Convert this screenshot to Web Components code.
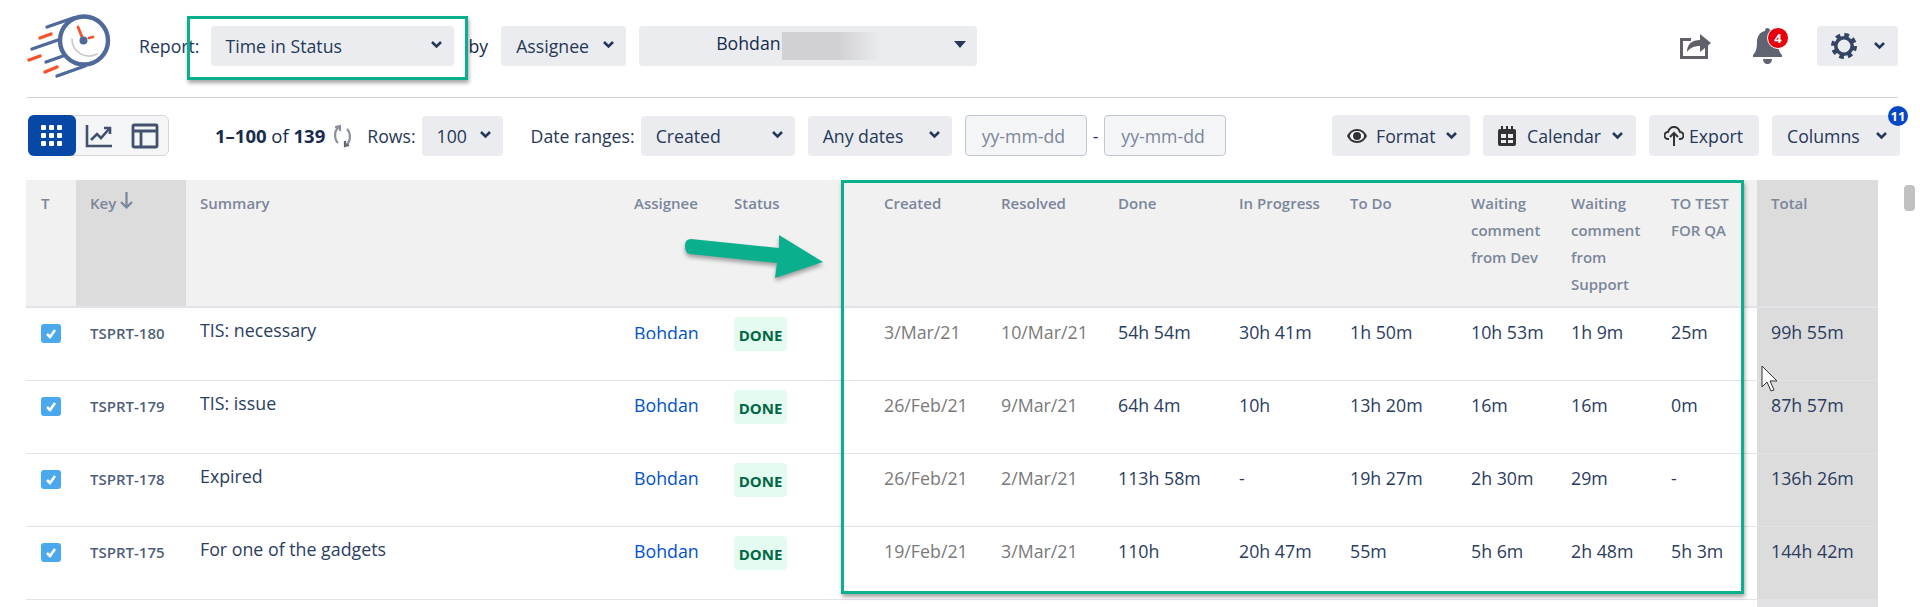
<!DOCTYPE html>
<html>
<head>
<meta charset="utf-8">
<title>Time in Status</title>
<style>
  html, body { margin: 0; height: 607px; overflow: hidden; background: #fff; }
  body { font-family: "Open Sans", "Noto Sans", sans-serif; color: #253858; }
  tis-app { position: relative; }
</style>
</head>
<body>
<tis-app>
  <tis-topbar>
    <tis-select slot="filters" width="243" style="margin-left:11px">Time in Status</tis-select>
    <span slot="filters" style="margin:0 13px 0 15px;color:#172b4d">by</span>
    <tis-select slot="filters" width="125">Assignee</tis-select>
    <tis-select slot="filters" width="338" caret="solid" style="margin-left:13px">
      <span style="color:#172b4d;margin-left:62px">Bohdan</span><span style="display:inline-block;width:100px;height:28px;margin-left:1px;vertical-align:middle;background:linear-gradient(90deg,#d1d1d5 0,#d1d1d5 55%,#ebecf0 100%)"></span>
    </tis-select>
  </tis-topbar>
  <tis-toolbar></tis-toolbar>
  <tis-table></tis-table>
  <tis-callouts></tis-callouts>
</tis-app>

<script>
const chevron = `<svg width="13" height="9" viewBox="0 0 13 9"><path d="M2 2l4.500 4.500L11 2" fill="none" stroke="#253858" stroke-width="2.600"/></svg>`;

class TisSelect extends HTMLElement {
  constructor() {
    super();
    this.attachShadow({ mode: 'open' });
    const w = this.getAttribute('width') || 100;
    const caret = this.getAttribute('caret') === 'solid'
      ? `<svg width="12" height="7" viewBox="0 0 12 7"><path d="M0 0h12L6 7z" fill="#253858"/></svg>`
      : chevron;
    this.shadowRoot.innerHTML = `
      <style>
        :host { display:inline-flex; align-items:center; justify-content:space-between; box-sizing:border-box;
                width:${w}px; height:40px; padding:0 11px 0 15px; background:#ebecf0; border-radius:4px;
                font-size:17.700px; color:#253858; white-space:nowrap; flex:none; }
        svg { margin-top:-3px; flex:none; }
      </style>
      <span><slot></slot></span>${caret}`;
  }
}
customElements.define('tis-select', TisSelect);

class TisButton extends HTMLElement {
  constructor() {
    super();
    this.attachShadow({ mode: 'open' });
    const w = this.getAttribute('width') || 100;
    this.shadowRoot.innerHTML = `
      <style>
        :host { display:inline-flex; align-items:center; box-sizing:border-box; width:${w}px; height:41px;
                padding:0 12px 0 15px; gap:9px; background:#ebecf0; border-radius:4px; font-size:17.700px;
                color:#253858; white-space:nowrap; position:relative; }
        .badge { position:absolute; top:-9px; right:-8px; width:20px; height:20px; border-radius:50%;
                 background:#0747c6; color:#fff; font-size:13px; font-weight:700; text-align:center; line-height:20px; }
      </style>
      <slot name="icon"></slot><span style="flex:1"><slot></slot></span>${this.hasAttribute('menu') ? chevron : ''}
      ${this.hasAttribute('badge') ? `<span class="badge">${this.getAttribute('badge')}</span>` : ''}`;
  }
}
customElements.define('tis-button', TisButton);

class TisTopbar extends HTMLElement {
  constructor() {
    super();
    this.attachShadow({ mode: 'open' });
    this.shadowRoot.innerHTML = `
      <style>
        :host { display:flex; align-items:center; box-sizing:border-box; height:98px; margin:0 22px 0 27px; padding-bottom:6px;
                border-bottom:1px solid #d2d2d2; font-size:17.700px; color:#253858; }
        .logo { flex:none; align-self:flex-start; margin:14px 28px 0 0; }
        .right { margin-left:auto; display:flex; align-items:center; }
        .bell { position:relative; width:32px; height:36px; margin:0 32px 0 42px; }
        .bell b { position:absolute; left:14px; top:-1px; width:20px; height:20px; border-radius:50%; background:#e8000d;
                  border:1px solid #fff; color:#fff; font-size:13px; line-height:20px; text-align:center; }
        .gear { display:flex; align-items:center; box-sizing:border-box; width:81px; height:40px; background:#ebecf0;
                border-radius:4px; padding:0 12px 0 14px; justify-content:space-between; }
      </style>
      <svg class="logo" width="84" height="66" viewBox="27 14 84 66" fill="none" stroke-linecap="round">
        <g stroke="#4f6a9a" stroke-width="3.400">
          <circle cx="84" cy="40.500" r="24" stroke-width="4.400"/>
          <path d="M47 27L73 18M32 49L58 40M46 62L63 56M57 76L85 66"/>
        </g>
        <path d="M72 39a17 17 0 0 0 25 15" stroke="#c9c9c9" stroke-width="1.600"/>
        <g stroke="#f4532c" stroke-width="3.400">
          <path d="M40 38L51 34M29 60L40 56M45 72L57 67"/>
          <path d="M78 27L82 37M89 38L93 37" stroke-width="2.800"/>
        </g>
        <circle cx="83.500" cy="40.500" r="4" fill="#4f6a9a"/>
      </svg>
      <span>Report:</span>
      <slot name="filters"></slot>
      <div class="right">
        <svg width="31" height="27" viewBox="0 0 31 27" fill="#5f6068">
          <path d="M0 6h11v3H3v15h22v-9l3-2v14H0z"/>
          <path d="M7 20c0-8 5-12 13-12V2l11 9-11 9v-6c-6 0-10 2-13 6z"/>
        </svg>
        <div class="bell">
          <svg width="30" height="36" viewBox="0 0 30 36" fill="#5f6470">
            <path d="M14 0c2 0 3 1 3 3 5 1 8 5 8 11 0 6 1 10 4 13v2H0v-2c3-3 4-7 4-13 0-6 3-10 8-11 0-2 1-3 2-3z"/>
            <path d="M10 31h9c0 3-2 5-4.500 5S10 34 10 31z"/>
          </svg>
          <b>4</b>
        </div>
        <div class="gear">
          <svg width="26" height="26" viewBox="0 0 26 26" fill="none" stroke="#344563">
            <circle cx="13" cy="13" r="8.200" stroke-width="3.600"/>
            <circle cx="13" cy="13" r="11" stroke-width="4" stroke-dasharray="4.640 4"/>
          </svg>
          ${chevron}
        </div>
      </div>`;
  }
}
customElements.define('tis-topbar', TisTopbar);

class TisToolbar extends HTMLElement {
  constructor() {
    super();
    this.attachShadow({ mode: 'open' });
    this.shadowRoot.innerHTML = `
      <style>
        :host { display:flex; align-items:center; height:41px; margin:17px 20px 0 28px; font-size:17.700px; color:#253858; white-space:nowrap; }
        .toggle { display:flex; width:141px; height:41px; box-sizing:border-box; border:1px solid #d5d6d9; border-radius:6px; background:#f4f5f7; flex:none; }
        .toggle div { display:flex; align-items:center; justify-content:center; width:46px; }
        .toggle .on { width:48px; margin:-1px 0 -1px -1px; background:#0747a6; border-radius:6px; }
        .count { margin-left:46px; color:#172b4d; font-size:18.500px; }
        .count b { font-weight:700; }
        .refresh { margin:0 0 0 7px; flex:none; }
        input { box-sizing:border-box; width:122px; height:41px; border:1px solid #c1c7d0; border-radius:4px; background:#f4f5f7;
                padding:0 0 0 16px; font:17.700px "Open Sans", sans-serif; flex:none; }
        input::placeholder { color:#7a869a; opacity:1; }
        .right { margin-left:auto; display:flex; gap:13px; }
      </style>
      <div class="toggle">
        <div class="on"><svg width="22" height="22" viewBox="0 0 22 22" fill="#fff">
          <rect width="5" height="5" rx="1"/><rect x="8" width="5" height="5" rx="1"/><rect x="16" width="5" height="5" rx="1"/>
          <rect y="8" width="5" height="5" rx="1"/><rect x="8" y="8" width="5" height="5" rx="1"/><rect x="16" y="8" width="5" height="5" rx="1"/>
          <rect y="16" width="5" height="5" rx="1"/><rect x="8" y="16" width="5" height="5" rx="1"/><rect x="16" y="16" width="5" height="5" rx="1"/>
        </svg></div>
        <div><svg width="28" height="24" viewBox="0 0 28 24" fill="none" stroke="#42526e" stroke-width="2.600">
          <path d="M2 1v21h25"/><path d="M6 16l6-6 4 4 8-9"/><path d="M19 4h6v6"/>
        </svg></div>
        <div><svg width="28" height="26" viewBox="0 0 28 26" fill="none" stroke="#42526e" stroke-width="2.800">
          <rect x="2" y="2" width="24" height="22" rx="1"/><path d="M2 8h24M10 8v16"/>
        </svg></div>
      </div>
      <span class="count"><b>1–100</b> of <b>139</b></span>
      <svg class="refresh" width="20" height="24" viewBox="0 0 20 24" fill="none" stroke="#8a8f99" stroke-width="2.200">
        <path d="M7 3C2 6 2 15 6 19M3 3l5-1 0 5"/><path d="M14 21c5-3 5-12 1-16"/><path d="M17 21l-4 1 0-5" stroke="#5f6675"/>
      </svg>
      <span style="margin:0 6px 0 15px">Rows:</span>
      <tis-select width="81">100</tis-select>
      <span style="margin:0 6px 0 28px">Date ranges:</span>
      <tis-select width="154">Created</tis-select>
      <tis-select width="144" style="margin:0 13px">Any dates</tis-select>
      <input placeholder="yy-mm-dd">
      <span style="margin:0 6px">-</span>
      <input placeholder="yy-mm-dd">
      <div class="right">
        <tis-button width="138" menu>
          <svg slot="icon" width="20" height="14" viewBox="0 0 20 14"><path d="M10 0C5 0 2 3 0 7c2 4 5 7 10 7s8-3 10-7c-2-4-5-7-10-7z" fill="#333"/><ellipse cx="10" cy="7" rx="7" ry="5" fill="#fff"/><circle cx="10" cy="7" r="4" fill="#333"/></svg>
          Format
        </tis-button>
        <tis-button width="153" menu>
          <svg slot="icon" width="18" height="20" viewBox="0 0 18 20" fill="#333"><path d="M2 3h14a2 2 0 0 1 2 2v13a2 2 0 0 1-2 2H2a2 2 0 0 1-2-2V5a2 2 0 0 1 2-2z"/><path d="M3 0h2v4H3zM8 0h2v4H8zM13 0h2v4h-2z"/><path d="M3 8h5v4H3zM10 8h5v4h-5zM3 14h5v3H3zM10 14h5v3h-5z" fill="#ebecf0"/></svg>
          <span style="margin-left:2px">Calendar</span>
        </tis-button>
        <tis-button width="110">
          <svg slot="icon" width="20" height="20" viewBox="0 0 20 20" fill="none" stroke="#333" stroke-width="2"><path d="M5 13H4a3.500 3.500 0 0 1 0-7c1-3 3-5 6-5s5 2 6 5a3.500 3.500 0 0 1 0 7h-1"/><path d="M10 20V8M6 11l4-4 4 4"/></svg>
          <span style="margin-left:-4px">Export</span>
        </tis-button>
        <tis-button width="128" menu badge="11">Columns</tis-button>
      </div>`;
  }
}
customElements.define('tis-toolbar', TisToolbar);

const COLS = '50px 110px 434px 100px 150px 117px 117px 121px 111px 121px 100px 100px 100px 121px';

class TisHeaderRow extends HTMLElement {
  constructor() {
    super();
    this.attachShadow({ mode: 'open' });
    const heads = ['T', 'Key', 'Summary', 'Assignee', 'Status', 'Created', 'Resolved', 'Done', 'In Progress', 'To Do',
      'Waiting comment from Dev', 'Waiting comment from Support', 'TO TEST FOR QA', 'Total'];
    const cells = heads.map((h, i) => {
      const cls = i === 1 || i === 13 ? 'gray' : '';
      const txt = i === 1 ? `Key <svg width="13" height="17" viewBox="0 0 13 17" fill="none" stroke="#7a869a" stroke-width="2.200"><path d="M6.500 0v15M1 10l5.500 5.500L12 10"/></svg>` : h;
      const pad = i === 0 ? 'style="padding-left:15px"' : '';
      return `<div class="${cls}" ${pad}>${txt}</div>`;
    }).join('');
    this.shadowRoot.innerHTML = `
      <style>
        :host { display:grid; grid-template-columns:${COLS}; height:126px; background:#f1f1f1; border-bottom:2px solid #e1e3e8;
                font-size:15px; line-height:27px; font-weight:600; color:#7a869a; }
        div { padding:10px 4px 0 14px; }
        .gray { background:#dcdcdc; }
      </style>${cells}`;
  }
}
customElements.define('tis-header-row', TisHeaderRow);

class TisIssueRow extends HTMLElement {
  constructor() {
    super();
    this.attachShadow({ mode: 'open' });
    const d = this.dataset;
    const times = d.times.split('|').map(t => `<div class="t">${t}</div>`).join('');
    this.shadowRoot.innerHTML = `
      <style>
        :host { display:grid; grid-template-columns:${COLS}; height:73px; box-sizing:border-box; border-bottom:1px solid #e1e3e8;
                font-size:17.800px; line-height:24px; color:#2b3d5f; white-space:nowrap; }
        div { padding:12px 0 0 14px; }
        .check { padding:16px 0 0 15px; }
        .box { display:block; width:20px; height:19px; border-radius:3px; background:#4aa8ec; }
        .key { font-size:15px; font-weight:600; color:#505f79; padding-top:13px; }
        .sum { padding-top:10px; }
        .link { color:#0052cc; }
        .clip { display:inline-block; height:18px; overflow:hidden; }
        .st { padding-top:9px; }
        .st span { display:inline-flex; align-items:center; justify-content:center; width:53px; height:34px; padding-top:1px; box-sizing:border-box;
                   background:#e3fcef; color:#006644; border-radius:4px; font-size:15px; font-weight:700; }
        .date { color:#7a7a7a; }
        .total { background:#dcdcdc; }
      </style>
      <div class="check"><svg class="box" viewBox="0 0 20 19" fill="none" stroke="#fff" stroke-width="2.600"><path d="M6 10l3 3 5-7"/></svg></div>
      <div class="key">${d.key}</div>
      <div class="sum">${d.summary}</div>
      <div class="link"><span class="${d.clip !== undefined ? 'clip' : ''}">Bohdan</span></div>
      <div class="st"><span>DONE</span></div>
      <div class="date">${d.created}</div>
      <div class="date">${d.resolved}</div>
      ${times}
      <div class="total">${d.total}</div>`;
  }
}
customElements.define('tis-issue-row', TisIssueRow);

class TisTable extends HTMLElement {
  constructor() {
    super();
    this.attachShadow({ mode: 'open' });
    this.shadowRoot.innerHTML = `
      <style>
        :host { display:flex; margin:24px 0 0 26px; align-items:flex-start; }
        .grid { width:1852px; flex:none; }
        .tail { height:8px; width:1852px; background:linear-gradient(90deg,transparent 1731px,#e2e2e4 1731px); }
        .thumb { flex:none; width:11px; height:26px; margin:5px 0 0 26px; border-radius:4px; background:#c1c1c1; }
      </style>
      <div class="grid">
        <tis-header-row></tis-header-row>
        <tis-issue-row data-clip data-key="TSPRT-180" data-summary="TIS: necessary" data-created="3/Mar/21" data-resolved="10/Mar/21"
          data-times="54h 54m|30h 41m|1h 50m|10h 53m|1h 9m|25m" data-total="99h 55m"></tis-issue-row>
        <tis-issue-row data-key="TSPRT-179" data-summary="TIS: issue" data-created="26/Feb/21" data-resolved="9/Mar/21"
          data-times="64h 4m|10h|13h 20m|16m|16m|0m" data-total="87h 57m"></tis-issue-row>
        <tis-issue-row data-key="TSPRT-178" data-summary="Expired" data-created="26/Feb/21" data-resolved="2/Mar/21"
          data-times="113h 58m|-|19h 27m|2h 30m|29m|-" data-total="136h 26m"></tis-issue-row>
        <tis-issue-row data-key="TSPRT-175" data-summary="For one of the gadgets" data-created="19/Feb/21" data-resolved="3/Mar/21"
          data-times="110h|20h 47m|55m|5h 6m|2h 48m|5h 3m" data-total="144h 42m"></tis-issue-row>
        <div class="tail"></div>
      </div>
      <div class="thumb"></div>`;
  }
}
customElements.define('tis-table', TisTable);

// hand drawn marks on top of the screenshot: green frames, arrow, mouse pointer
class TisCallouts extends HTMLElement {
  constructor() {
    super();
    this.attachShadow({ mode: 'open' });
    this.shadowRoot.innerHTML = `
      <style>
        :host { display:block; }
        .frame { position:absolute; box-sizing:border-box; border:3px solid #0aaf8d; box-shadow:1px 3px 4px rgba(0,0,0,.35); }
        svg { position:absolute; }
      </style>
      <div class="frame" style="left:187px;top:16px;width:281px;height:64px"></div>
      <div class="frame" style="left:841px;top:180px;width:903px;height:414px"></div>
      <svg style="left:680px;top:230px;filter:drop-shadow(0 3px 2px rgba(0,0,0,.35))" width="150" height="55" viewBox="0 0 150 55">
        <path d="M11 9L99 18 99 5 143 32 95 48 97 33 10 24Q5 23 5 16 5 9 11 9z" fill="#0aaf8d"/>
      </svg>
      <svg style="left:1761px;top:365px" width="18" height="28" viewBox="0 0 18 28">
        <path d="M1 1v21l5-5 4 9 3-1-4-9h7z" fill="#fff" stroke="#333" stroke-width="1"/>
      </svg>`;
  }
}
customElements.define('tis-callouts', TisCallouts);

class TisApp extends HTMLElement {
  constructor() {
    super();
    this.attachShadow({ mode: 'open' });
    this.shadowRoot.innerHTML = `<style>:host { display:block; }</style><slot></slot>`;
  }
}
customElements.define('tis-app', TisApp);
</script>
</body>
</html>
